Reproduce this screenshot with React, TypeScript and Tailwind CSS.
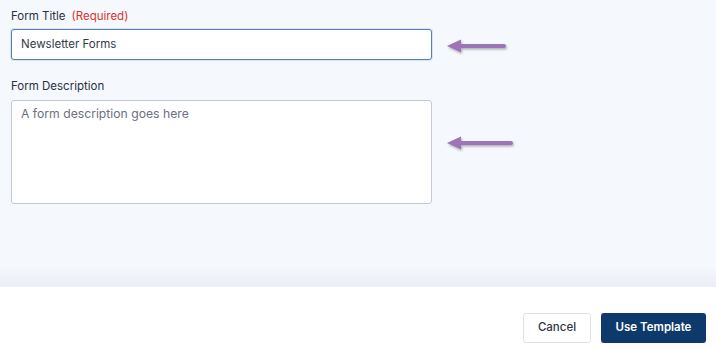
import React from "react"

function Arrow({ width }: { width: number }) {
    return (
        <svg width={width + 8} height="20" viewBox={`0 0 ${width + 8} 20`} className="shrink-0">
            <defs>
                <filter id={`sh${width}`} x="-20%" y="-50%" width="140%" height="200%">
                    <feDropShadow dx="1" dy="1.5" stdDeviation="1.3" floodColor="#000" floodOpacity="0.3" />
                </filter>
            </defs>
            <g filter={`url(#sh${width})`}>
                <line x1="14" y1="9" x2={width - 2} y2="9" stroke="#9b74b8" strokeWidth="4" strokeLinecap="round" />
                <polygon points="1,9 15,2.5 15,15.5" fill="#9b74b8" />
            </g>
        </svg>
    )
}

export default function App() {
    return (
        <div className="flex h-[349px] w-[716px] flex-col overflow-hidden bg-white font-['Inter',sans-serif]">
            <div className="flex flex-1 flex-col bg-[#f5f8fc]">
                <div className="flex-1 px-[11px] pt-[6px]">
                    {/* Form Title */}
                    <div className="flex h-[20px] items-center gap-[6px] text-[11.5px] leading-[20px]">
                        <span className="text-[#2b2f42]">Form Title</span>
                        <span className="text-[#d8352b]">(Required)</span>
                    </div>
                    <div className="mt-[3px] flex items-center gap-[14px]">
                        <div className="flex h-[31px] w-[421px] items-center rounded-[3px] border border-[#5b7fae] bg-white px-[9px] text-[11.5px] text-[#363a4a] shadow-[0_0_0_1px_#d6e4f5]">
                            Newsletter Forms
                        </div>
                        <div className="mt-[4px]">
                            <Arrow width={60} />
                        </div>
                    </div>

                    {/* Form Description */}
                    <div className="mt-[16px] h-[20px] text-[11.5px] leading-[20px] text-[#2b2f42]">Form Description</div>
                    <div className="mt-[4px] flex items-start gap-[14px]">
                        <div className="h-[104px] w-[421px] rounded-[3px] border border-[#c6c8da] bg-white px-[9px] pt-[4px] text-[12.2px] text-[#6c7080]">
                            A form description goes here
                        </div>
                        <div className="mt-[34px]">
                            <Arrow width={67} />
                        </div>
                    </div>
                </div>
                <div className="h-[22px] bg-gradient-to-b from-[#f5f8fc] to-[#eceef7]" />
            </div>
            <div className="flex h-[62px] items-start justify-end gap-[10px] pr-[10px] pt-[26px]">
                <button className="h-[30px] w-[68px] rounded-[3px] border border-[#dfe2ec] bg-white text-[11.5px] font-medium text-[#2f3446]">
                    Cancel
                </button>
                <button className="h-[30px] w-[105px] rounded-[3px] bg-[#0e3a6b] text-[11.5px] font-semibold text-white">
                    Use Template
                </button>
            </div>
        </div>
    )
}
